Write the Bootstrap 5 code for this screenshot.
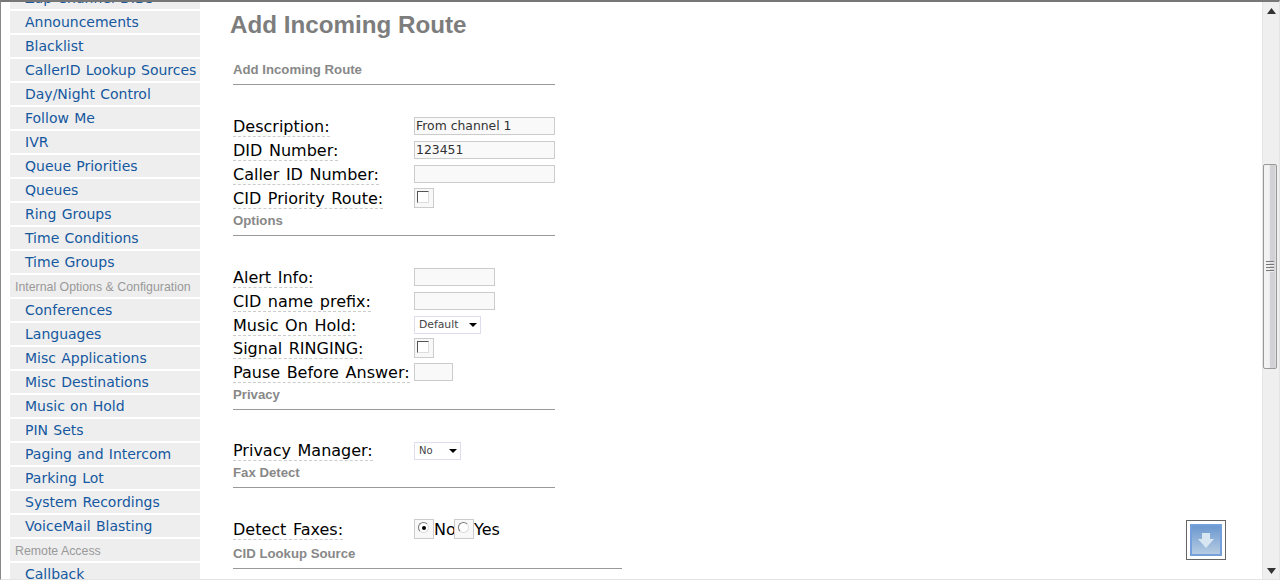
<!DOCTYPE html>
<html lang="en"><head><meta charset="utf-8"><title>Add Incoming Route</title>
<link href="https://cdn.jsdelivr.net/npm/bootstrap@5.3.0/dist/css/bootstrap.min.css" rel="stylesheet">
<style>
html,body{height:580px;overflow:hidden;background:#fff}
body{font-family:"DejaVu Sans",Verdana,sans-serif;color:#000}
.frame{width:1280px;height:580px;border-top:2px solid #777;border-left:1px solid #888;border-bottom:1px solid #e4e4e4;border-right:1px solid #e4e4e4;overflow:hidden}
.pageview{width:1261px;height:577px;overflow:hidden}
.sidecol{width:199px;padding-left:9px;flex:none;margin-top:-16px;padding-top:1px}
.sideitem{display:block;width:190px;height:22px;margin-bottom:2px;background:#eee;color:#15589f;font-size:14px;word-spacing:.8px;line-height:22px;padding-left:15px;white-space:nowrap;text-decoration:none;overflow:hidden}
.sidehead{display:block;width:190px;height:22px;margin-bottom:2px;background:#eee;color:#999;font-family:"Liberation Sans",Arial,sans-serif;font-size:12.35px;line-height:24px;padding-left:5px;white-space:nowrap}
.maincol{padding-left:30px;flex:1;min-width:0}
.pagetitle{font-family:"Liberation Sans",Arial,sans-serif;font-weight:700;font-size:24.2px;line-height:28px;color:#7d7d7d;margin:9px 0 0}
.sect{font-family:"Liberation Sans",Arial,sans-serif;font-weight:700;font-size:13.2px;line-height:14px;color:#888;margin:2px 0 0 3px;width:322px;height:21px;padding-top:1px;border-bottom:1px solid #999;box-sizing:content-box}
.sect1{margin-top:23px}
.sectw{width:389px;margin-top:4px}
.rows{margin:30px 0 0 3px}
.rowsup{margin-top:29px}
.frow{display:flex;height:24px;align-items:flex-start}
.frowshort{height:23px}
.flabel{width:181px;flex:none;font-size:16px;word-spacing:1.5px}
.flabel span{border-bottom:1px dashed #ccc;display:inline-block;line-height:22px;height:21px;white-space:nowrap}
.tinput{height:18px;margin-top:2px;border:1px solid #ccc;background:#f9f9f9;font-family:"DejaVu Sans",sans-serif;font-size:12.4px;color:#333;padding:0 1px;border-radius:0;outline:0}
.w141{width:141px}.w81{width:81px}.w39{width:39px}
.boxwrap{width:20px;height:20px;margin-top:1px;border:1px solid #ccc;background:#f8f8f8;display:flex;padding:2px;flex:none}
.cbox{width:12px;height:12px;border:1px solid #555;border-right-color:#ddd;border-bottom-color:#ddd;background:#fff}
.radiob{width:11px;height:11px;border-radius:50%;border:1px solid;border-color:#777 #ddd #ddd #777;background:#fff;display:flex;align-items:center;justify-content:center;margin-left:1px}
.radiob i{display:block;width:4px;height:4px;border-radius:50%;background:#000}
.fsel{height:18px;margin-top:2px;border:1px solid #dde;background:#fff;font-size:10.8px;line-height:16px;color:#444;padding-left:4px;display:flex;align-items:center;justify-content:space-between}
.fselno{margin-top:3px;font-size:10px}
.fsel b{display:block;width:0;height:0;border-left:4px solid transparent;border-right:4px solid transparent;border-top:4px solid #000;margin-right:3px}
.optxt{font-size:16px;line-height:24px}
.optno{width:20px;flex:none}
.downbox{position:absolute;right:53px;bottom:19px;width:40px;height:40px;border:1px solid #666;background:#fff;padding:3px}
.downinner{width:32px;height:32px;border:2px solid #76a0dc;background:linear-gradient(#6c98cf,#b5cce2);display:flex;align-items:center;justify-content:center}
.sbar{width:17px;flex:none;background:#efefef;border-left:1px solid #e6e6e6;display:flex;flex-direction:column;position:relative}
.sbtn{height:17px;display:flex;align-items:center;justify-content:center;flex:none}
.sthumb{width:14px;height:205px;margin-top:145px;border:1px solid #999;border-radius:2px;background:linear-gradient(90deg,#f2f2f2 0 45%,#d2d2d6 50% 90%,#e8e8e8);display:flex;flex-direction:column;align-items:center;justify-content:center;gap:1px;flex:none}
.sthumb i{display:block;width:8px;height:2px;background:#777;border-bottom:1px solid #eee}
</style></head>
<body>
<div class="frame d-flex position-relative">
 <div class="pageview d-flex flex-grow-1">
  <nav class="sidecol">
   <a class="sideitem" href="#">Zap Channel DIDs</a>
   <a class="sideitem" href="#">Announcements</a>
   <a class="sideitem" href="#">Blacklist</a>
   <a class="sideitem" href="#">CallerID Lookup Sources</a>
   <a class="sideitem" href="#">Day/Night Control</a>
   <a class="sideitem" href="#">Follow Me</a>
   <a class="sideitem" href="#">IVR</a>
   <a class="sideitem" href="#">Queue Priorities</a>
   <a class="sideitem" href="#">Queues</a>
   <a class="sideitem" href="#">Ring Groups</a>
   <a class="sideitem" href="#">Time Conditions</a>
   <a class="sideitem" href="#">Time Groups</a>
   <div class="sidehead">Internal Options &amp; Configuration</div>
   <a class="sideitem" href="#">Conferences</a>
   <a class="sideitem" href="#">Languages</a>
   <a class="sideitem" href="#">Misc Applications</a>
   <a class="sideitem" href="#">Misc Destinations</a>
   <a class="sideitem" href="#">Music on Hold</a>
   <a class="sideitem" href="#">PIN Sets</a>
   <a class="sideitem" href="#">Paging and Intercom</a>
   <a class="sideitem" href="#">Parking Lot</a>
   <a class="sideitem" href="#">System Recordings</a>
   <a class="sideitem" href="#">VoiceMail Blasting</a>
   <div class="sidehead">Remote Access</div>
   <a class="sideitem" href="#">Callback</a>
  </nav>
  <main class="maincol">
   <h1 class="pagetitle">Add Incoming Route</h1>
   <div class="sect sect1">Add Incoming Route</div>
   <div class="rows">
    <div class="frow"><div class="flabel"><span>Description:</span></div><input class="tinput w141" value="From channel 1"></div>
    <div class="frow"><div class="flabel"><span>DID Number:</span></div><input class="tinput w141" value="123451"></div>
    <div class="frow"><div class="flabel"><span>Caller ID Number:</span></div><input class="tinput w141"></div>
    <div class="frow"><div class="flabel"><span>CID Priority Route:</span></div><div class="boxwrap"><div class="cbox"></div></div></div>
   </div>
   <div class="sect">Options</div>
   <div class="rows">
    <div class="frow"><div class="flabel"><span>Alert Info:</span></div><input class="tinput w81"></div>
    <div class="frow"><div class="flabel"><span>CID name prefix:</span></div><input class="tinput w81"></div>
    <div class="frow frowshort"><div class="flabel"><span>Music On Hold:</span></div><div class="fsel" style="width:67px">Default<b></b></div></div>
    <div class="frow"><div class="flabel"><span>Signal RINGING:</span></div><div class="boxwrap"><div class="cbox"></div></div></div>
    <div class="frow"><div class="flabel"><span>Pause Before Answer:</span></div><input class="tinput w39"></div>
   </div>
   <div class="sect">Privacy</div>
   <div class="rows rowsup">
    <div class="frow"><div class="flabel"><span>Privacy Manager:</span></div><div class="fsel fselno" style="width:47px">No<b></b></div></div>
   </div>
   <div class="sect">Fax Detect</div>
   <div class="rows">
    <div class="frow"><div class="flabel"><span>Detect Faxes:</span></div><div class="boxwrap"><div class="radiob"><i></i></div></div><span class="optxt optno">No</span><div class="boxwrap"><div class="radiob"></div></div><span class="optxt">Yes</span></div>
   </div>
   <div class="sect sectw">CID Lookup Source</div>
  </main>
 </div>
 <div class="downbox"><div class="downinner"><svg width="16" height="15" viewBox="0 0 16 15"><path d="M4 0h8v6h4l-8 9-8-9h4z" fill="#d8e6f2"/></svg></div></div>
 <div class="sbar">
  <div class="sbtn"><svg width="9" height="6" viewBox="0 0 9 6"><path d="M4.5 0 9 6H0z" fill="#333"/></svg></div>
  <div class="sthumb"><i></i><i></i><i></i><i></i></div>
  <div class="flex-grow-1"></div>
  <div class="sbtn"><svg width="9" height="6" viewBox="0 0 9 6"><path d="M0 0h9L4.5 6z" fill="#333"/></svg></div>
 </div>
</div>
</body></html>
